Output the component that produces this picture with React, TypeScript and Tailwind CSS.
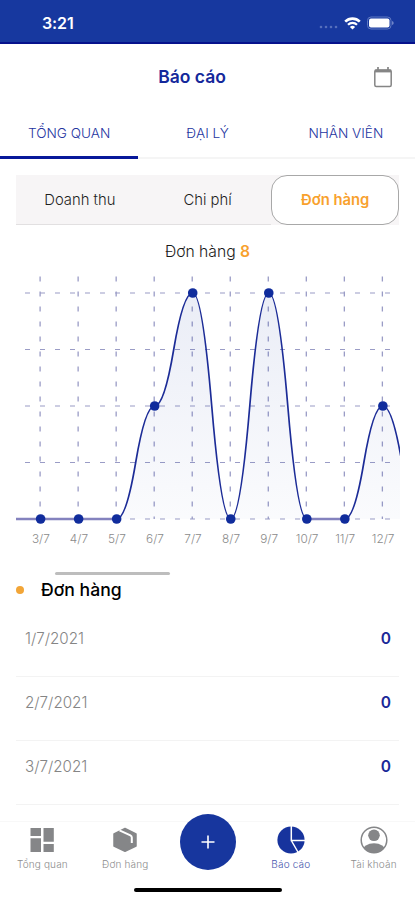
import { useState } from 'react'

const tabs = ['TỔNG QUAN', 'ĐẠI LÝ', 'NHÂN VIÊN']

const segments = ['Doanh thu', 'Chi phí', 'Đơn hàng']

const orders = [
  { date: '1/7/2021', total: 0 },
  { date: '2/7/2021', total: 0 },
  { date: '3/7/2021', total: 0 },
]

const chartData = [
  { label: '3/7', value: 0 },
  { label: '4/7', value: 0 },
  { label: '5/7', value: 0 },
  { label: '6/7', value: 2 },
  { label: '7/7', value: 4 },
  { label: '8/7', value: 0 },
  { label: '9/7', value: 4 },
  { label: '10/7', value: 0 },
  { label: '11/7', value: 0 },
  { label: '12/7', value: 2 },
]

const STEP = 38.03
const BASE = 249
const UNIT = 56.5

const getX = (i: number) => 24.6 + i * STEP
const getY = (value: number) => BASE - value * UNIT

// smooth line, one pair of quadratic curves per segment
const buildPath = (values: number[]) => {
  let d = `M ${getX(-1)} ${getY(values[0])}`
  for (let i = 0; i < values.length - 1; i++) {
    const x1 = getX(i - 1)
    const x2 = getX(i)
    const y1 = getY(values[i])
    const y2 = getY(values[i + 1])
    const midX = (x1 + x2) / 2
    const midY = (y1 + y2) / 2
    d += ` Q ${(midX + x1) / 2} ${y1} ${midX} ${midY} Q ${(midX + x2) / 2} ${y2} ${x2} ${y2}`
  }
  return d
}

const StatusBar = () => (
  <div className="flex h-11 items-center justify-between border-b-2 border-[#06118c] bg-[#17389f] pl-[42px] pr-[21px] pt-1">
    <span className="text-[16px] font-semibold leading-5 tracking-[-0.1px] text-white">3:21</span>
    <div className="flex items-center">
      <svg width="20" height="4" viewBox="0 0 20 4" className="mr-[5px] mt-2" fill="#566fbc">
        <circle cx="2" cy="2" r="1.3" />
        <circle cx="7" cy="2" r="1.3" />
        <circle cx="12" cy="2" r="1.3" />
        <circle cx="17" cy="2" r="1.3" />
      </svg>
      <svg width="17" height="13" viewBox="0 0 17 13" className="mr-[6px]">
        <path d="M1.2 4.6 A10.4 10.4 0 0 1 15.8 4.6" fill="none" stroke="#fff" strokeWidth="2.6" />
        <path d="M4 7.7 A6.4 6.4 0 0 1 13 7.7" fill="none" stroke="#fff" strokeWidth="2.2" />
        <path d="M8.5 12.6 L5.9 9.9 A3.8 3.8 0 0 1 11.1 9.9 Z" fill="#fff" />
      </svg>
      <svg width="27" height="14" viewBox="0 0 27 14">
        <rect x="0.5" y="1" width="23.5" height="12" rx="3.5" fill="none" stroke="#5f78c2" />
        <rect x="2" y="2.5" width="20.5" height="9" rx="2" fill="#fff" />
        <path d="M25.2 5 Q26.6 5.5 26.6 7 Q26.6 8.5 25.2 9 Z" fill="#8496d2" />
      </svg>
    </div>
  </div>
)

const Header = () => (
  <header className="relative flex h-[66px] items-center justify-center pr-[31px] pt-px">
    <h1 className="text-[17.5px] font-semibold text-[#14289b]">Báo cáo</h1>
    <svg width="20" height="22" viewBox="0 0 20 22" className="absolute right-[22px] top-[22px]">
      <path d="M2 3.6 H18 V6.4 H2 Z" fill="#858585" />
      <rect x="1.8" y="4" width="16.4" height="16.4" rx="1.5" fill="none" stroke="#858585" strokeWidth="1.5" />
      <path d="M5 1 V4 M15 1 V4" stroke="#858585" strokeWidth="1.7" />
    </svg>
  </header>
)

const OrdersChart = () => {
  // the last point lies beyond the visible part of the scrolling chart
  const path = buildPath([0, ...chartData.map((d) => d.value), 0])
  const endX = getX(chartData.length)

  return (
    <svg width="384" height="280" viewBox="0 0 384 280" className="block">
      <defs>
        <linearGradient id="area" x1="0" y1="23" x2="0" y2="249" gradientUnits="userSpaceOnUse">
          <stop offset="0" stopColor="#17389f" stopOpacity="0.09" />
          <stop offset="1" stopColor="#17389f" stopOpacity="0.02" />
        </linearGradient>
      </defs>
      {[0, 1, 2, 3, 4].map((row) => (
        <line key={row} x1="9" x2="375" y1={getY(row)} y2={getY(row)} stroke="#9a9cc6" strokeWidth="1.2" strokeDasharray="5 10" />
      ))}
      {chartData.map((d, i) => (
        <line key={d.label} x1={getX(i) - 0.5} x2={getX(i) - 0.5} y1="6.5" y2={BASE} stroke="#9a9cc6" strokeWidth="1.3" strokeDasharray="5 10" />
      ))}
      <path d={`${path} L ${endX} ${BASE} L ${getX(-1)} ${BASE} Z`} fill="url(#area)" />
      <path d={path} fill="none" stroke="#1c2c97" strokeWidth="1.7" />
      {/* flat stretches are drawn paler than the slopes */}
      {[
        [-1, 2],
        [7, 8],
      ].map(([from, to]) => (
        <line key={from} x1={getX(from)} x2={getX(to)} y1={BASE} y2={BASE} stroke="#8482be" strokeWidth="2.4" />
      ))}
      {chartData.map((d, i) => (
        <g key={d.label}>
          <circle cx={getX(i)} cy={getY(d.value)} r="4.8" fill="#102c9c" />
          <text x={getX(i) + 0.3} y="273" textAnchor="middle" fontSize="11.8" fontWeight="300" fill="#8b8b8b">
            {d.label}
          </text>
        </g>
      ))}
    </svg>
  )
}

const DashboardIcon = () => (
  <svg width="28" height="28" viewBox="0 0 28 28" fill="#858688">
    <path d="M2.5 2 H13 V10 H2.5 Z M15.5 2 H25.8 V15.7 H15.5 Z M2.5 12.3 H13 V26 H2.5 Z M15.5 18 H25.8 V26 H15.5 Z" />
  </svg>
)

const BoxIcon = () => (
  <svg width="28" height="28" viewBox="0 0 28 28">
    <path d="M14 2.5 L25 8 V20 L14 25.3 L3 20 V8 Z" fill="#858688" stroke="#858688" strokeWidth="1.5" strokeLinejoin="round" />
    <path d="M8.5 4.4 L19.4 9.3 Q20.8 10 20.8 11.5 V17" fill="none" stroke="#fff" strokeWidth="2" />
  </svg>
)

const PieIcon = () => (
  <svg width="28" height="28" viewBox="0 0 28 28">
    <circle cx="14" cy="14" r="13.6" fill="#17339d" />
    <path d="M14.3 0 V14.5 H28 M14.3 14.5 L21.5 27" fill="none" stroke="#fff" strokeWidth="1.5" />
  </svg>
)

const UserIcon = () => (
  <svg width="28" height="28" viewBox="0 0 28 28">
    <defs>
      <clipPath id="user-clip">
        <circle cx="14" cy="14" r="13" />
      </clipPath>
    </defs>
    <circle cx="14" cy="14" r="12.8" fill="#fff" stroke="#858688" strokeWidth="1.5" />
    <circle cx="14" cy="9.3" r="5.8" fill="#858688" />
    <ellipse cx="14" cy="25" rx="11.5" ry="7.8" fill="#858688" clipPath="url(#user-clip)" />
  </svg>
)

const navItems = [
  { label: 'Tổng quan', icon: DashboardIcon },
  { label: 'Đơn hàng', icon: BoxIcon },
  null,
  { label: 'Báo cáo', icon: PieIcon, active: true },
  { label: 'Tài khoản', icon: UserIcon },
]

const BottomNav = () => (
  <nav className="relative h-[79px] border-t border-[#f8f8f8] bg-white">
    <div className="flex pl-[1px]">
      {navItems.map((item) =>
        item ? (
          <button key={item.label} className="flex w-[83px] flex-col items-center pt-1">
            <item.icon />
            <span
              className={`mt-[3px] whitespace-nowrap text-[10px] font-light leading-[14px] tracking-[0.15px] ${
                item.active ? 'text-[#4656ae]' : 'text-[#8d8d8d]'
              }`}
            >
              {item.label}
            </span>
          </button>
        ) : (
          <div key="add" className="flex w-[83px] justify-center">
            <button className="-mt-2 flex h-14 w-14 items-center justify-center rounded-full bg-[#17369e]">
              <svg width="14" height="14" viewBox="0 0 14 14" stroke="#fff" strokeWidth="1.6">
                <path d="M7 0.5 V13.5 M0.5 7 H13.5" />
              </svg>
            </button>
          </div>
        )
      )}
    </div>
    <div className="absolute bottom-2 left-[134px] h-1 w-[148px] rounded-full bg-black" />
  </nav>
)

export default function App() {
  const [activeTab, setActiveTab] = useState(0)
  const [segment, setSegment] = useState(2)

  return (
    <div className="flex h-[900px] w-[415px] flex-col overflow-hidden bg-white font-['Inter','Liberation_Sans',sans-serif]">
      <StatusBar />
      <Header />

      <div className="flex h-[49px] border-b-2 border-[#f5f5f5]">
        {tabs.map((tab, i) => (
          <button
            key={tab}
            onClick={() => setActiveTab(i)}
            className={`-mb-[2px] flex-1 pt-[1px] text-[13.6px] font-light text-[#25359f] ${
              activeTab === i ? 'border-b-[3px] border-[#07189a]' : 'border-b-[3px] border-transparent'
            }`}
          >
            {tab}
          </button>
        ))}
      </div>

      <main className="flex-1 overflow-hidden px-4">
        <div className="mt-4 flex h-[50px] bg-[#f7f5f6]">
          {segments.map((name, i) => (
            <button
              key={name}
              onClick={() => setSegment(i)}
              className={`text-[14.8px] ${
                segment === i
                  ? 'w-32 rounded-[16px] border border-[#a8a8a8] bg-white font-semibold text-[#f8a12d]'
                  : 'w-32 border-b border-[#e2e0e1] pt-[2px] font-light text-[#1f1f1f]'
              }`}
            >
              {name}
            </button>
          ))}
        </div>

        <p className="mt-[17px] text-center text-[15.7px] font-light leading-5 text-[#1a1a1a]">
          Đơn hàng <span className="font-semibold text-[#f8a12d]">8</span>
        </p>

        <div className="mt-2">
          <OrdersChart />
        </div>

        <div className="ml-[39px] mt-[22px] h-[3px] w-[115px] rounded-full bg-[#bdbdbd]" />

        <div className="mt-1 flex h-[22px] items-center">
          <span className="h-2 w-2 rounded-full bg-[#f2a537]" />
          <h2 className="ml-[17px] text-[17.6px] font-medium text-black">Đơn hàng</h2>
        </div>

        <ul className="mt-3">
          {orders.map((order) => (
            <li key={order.date} className="flex h-16 items-center justify-between border-b border-[#f3f3f3] pb-[12px] pl-[9px] pr-2">
              <span className="pt-[2px] text-[15.2px] font-light text-[#858585]">{order.date}</span>
              <span className="text-[15.5px] font-semibold leading-5 text-[#1a2898]">{order.total}</span>
            </li>
          ))}
        </ul>
      </main>

      <BottomNav />
    </div>
  )
}
